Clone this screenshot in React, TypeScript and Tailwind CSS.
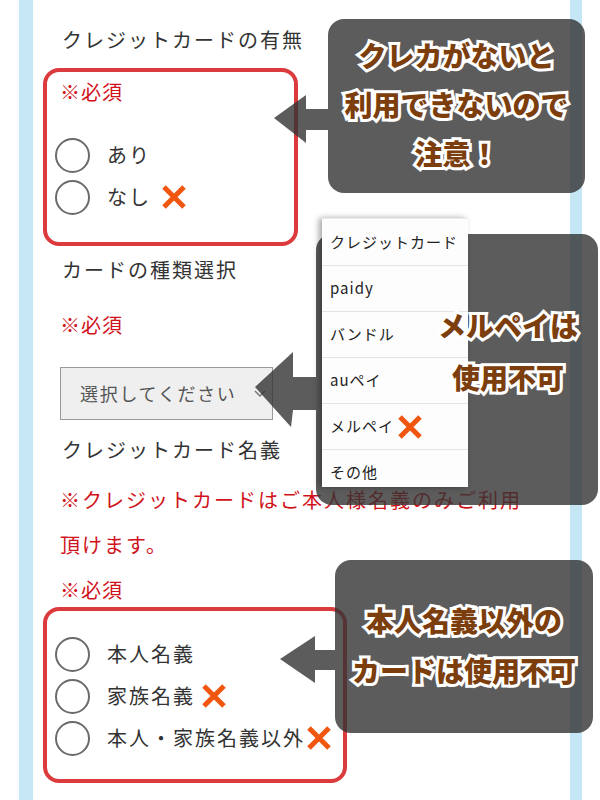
const Cross = ({ className = "" }: { className?: string }) => (
  <svg viewBox="0 0 28 28" className={`w-[28px] h-[28px] ${className}`}>
    <path d="M4 4 L24 24 M24 4 L4 24" stroke="#f0560f" strokeWidth="5" fill="none" />
  </svg>
);

const Radio = ({ label, cross, crossClass }: { label: string; cross?: boolean; crossClass?: string }) => (
  <div className="h-[42px] flex items-center">
    <span className="w-[35px] h-[35px] rounded-full border-2 border-[#6b6b6b] bg-white shrink-0" />
    <span className="ml-[17px] text-[20px] tracking-[2px] text-[#333]">{label}</span>
    {cross && <Cross className={crossClass} />}
  </div>
);

const Title = ({ children, className = "" }: { children: React.ReactNode; className?: string }) => (
  <div className={`pl-[29px] text-[20px] leading-[30px] tracking-[2px] text-[#333] ${className}`}>{children}</div>
);

const Required = ({ className = "" }: { className?: string }) => (
  <div className={`text-[20px] leading-[30px] tracking-[1px] text-[#d0121b] ${className}`}>※必須</div>
);

const calloutText =
  "font-black text-[#7b3e0c] [-webkit-text-stroke:6px_#fff] [paint-order:stroke_fill] text-center whitespace-nowrap";

const payOptions = ["クレジットカード", "paidy", "バンドル", "auペイ", "メルペイ", "その他"];

export default function App() {
  return (
    <div className="relative w-[600px] h-[800px] overflow-hidden bg-white flex font-['Noto_Sans_CJK_JP','Noto_Sans',sans-serif]">
      <div className="w-[19px]" />
      <div className="w-[14px] bg-[#c4e6f5]" />

      <main className="flex-1 flex flex-col pt-[25px]">
        <Title>クレジットカードの有無</Title>

        <div className="ml-[10px] mt-[13px] w-[255px] h-[178px] border-[4px] border-[#dc3b3d] rounded-[16px] pt-[5px] pl-[8px]">
          <Required className="pl-[5px]" />
          <div className="mt-[27px]">
            <Radio label="あり" />
            <Radio label="なし" cross crossClass="ml-[9px]" />
          </div>
        </div>

        <Title className="mt-[9px]">カードの種類選択</Title>
        <Required className="pl-[27px] mt-[25px]" />

        <div className="ml-[27px] mt-[27px] w-[213px] h-[53px] bg-[#efefef] border border-[#9a9a9a] flex items-center pl-[19px] text-[18px] tracking-[1.7px] text-[#555]">
          <span className="flex-1">選択してください</span>
          <svg viewBox="0 0 12 8" className="w-[12px] h-[8px] mr-[6px]">
            <path d="M1 1 L6 6 L11 1" stroke="#777" strokeWidth="1.5" fill="none" />
          </svg>
        </div>

        <Title className="mt-[15px]">クレジットカード名義</Title>
        <div className="pl-[27px] mt-[12px] text-[20px] leading-[45px] tracking-[2px] text-[#d0121b]">
          ※クレジットカードはご本人様名義のみご利用
          <br />
          頂けます。
        </div>
        <Required className="pl-[27px] mt-[8px]" />

        <div className="ml-[10px] mt-[2px] w-[304px] h-[176px] border-[4px] border-[#dc3b3d] rounded-[16px] pt-[22px] pl-[8px]">
          <Radio label="本人名義" />
          <Radio label="家族名義" cross crossClass="ml-[5px]" />
          <Radio label="本人・家族名義以外" cross crossClass="ml-[0px]" />
        </div>
      </main>

      <div className="w-[12px] bg-[#c4e6f5]" />
      <div className="w-[18px]" />

      {/* arrows */}
      <svg className="absolute inset-0 w-[600px] h-[800px] pointer-events-none" viewBox="0 0 600 800">
        <g fill="rgba(51,51,51,0.8)">
          <polygon points="274,118 306,95 306,109 328,109 328,130 306,130 306,143" />
          <polygon points="255,387 293,352 293,377 316,377 316,410 293,410 291,427" />
          <polygon points="280,659 315,636 315,650 335,650 335,670 315,670 315,683" />
        </g>
      </svg>

      {/* callout 1 */}
      <div className="absolute left-[328px] top-[19px] w-[257px] h-[174px] rounded-[16px] bg-[#333]/80 flex flex-col items-center pt-[12px] text-[28px] leading-[49px]">
        <div className={calloutText}>クレカがないと</div>
        <div className={calloutText}>利用できないので</div>
        <div className={calloutText}>注意！</div>
      </div>

      {/* callout 2 box */}
      <div className="absolute left-[316px] top-[234px] w-[282px] h-[271px] rounded-[16px] bg-[#333]/80" />

      {/* dropdown list */}
      <div className="absolute left-[322px] top-[218px] w-[146px] h-[269px] overflow-hidden bg-[#fdfdfd] border-t border-[#ececec] shadow-[-3px_0_6px_rgba(0,0,0,0.35)]">
        {payOptions.map((o, i) => (
          <div
            key={o}
            className={`${i === 0 ? "h-[47px]" : "h-[46px]"} flex items-center pl-[8px] border-b border-[#e4e4e4] text-[15px] tracking-[1px] text-[#222]`}
          >
            <span>{o}</span>
            {o === "メルペイ" && <Cross className="ml-[2px]" />}
          </div>
        ))}
      </div>

      {/* callout 2 text, drawn over the list */}
      <div className="absolute left-[418px] top-[299px] w-[180px] flex flex-col items-center text-[28px] leading-[52px]">
        <div className={calloutText}>メルペイは</div>
        <div className={calloutText}>使用不可</div>
      </div>

      {/* callout 3 */}
      <div className="absolute left-[335px] top-[560px] w-[258px] h-[173px] rounded-[16px] bg-[#333]/80 flex flex-col items-center pt-[35px] text-[28px] leading-[50px]">
        <div className={calloutText}>本人名義以外の</div>
        <div className={calloutText}>カードは使用不可</div>
      </div>
    </div>
  );
}
